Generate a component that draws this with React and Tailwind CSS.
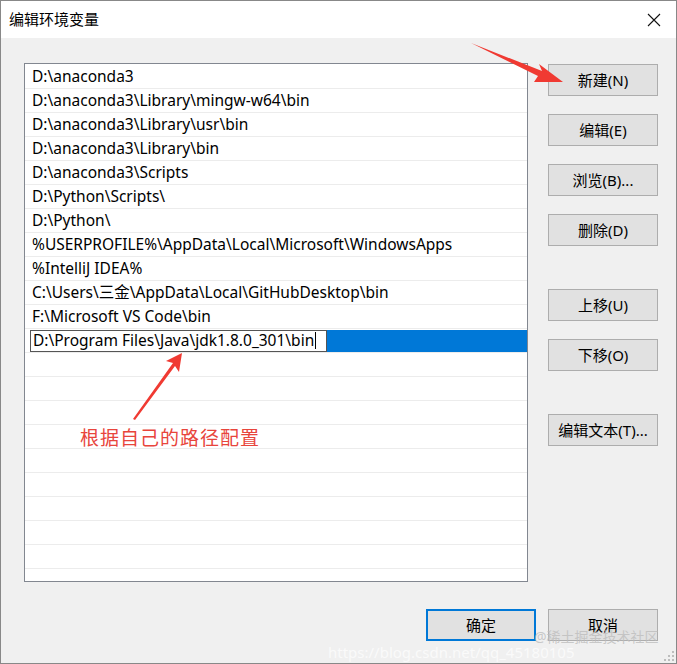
import React from 'react';

const paths = [
  'D:\\anaconda3',
  'D:\\anaconda3\\Library\\mingw-w64\\bin',
  'D:\\anaconda3\\Library\\usr\\bin',
  'D:\\anaconda3\\Library\\bin',
  'D:\\anaconda3\\Scripts',
  'D:\\Python\\Scripts\\',
  'D:\\Python\\',
  '%USERPROFILE%\\AppData\\Local\\Microsoft\\WindowsApps',
  '%IntelliJ IDEA%',
  'C:\\Users\\三金\\AppData\\Local\\GitHubDesktop\\bin',
  'F:\\Microsoft VS Code\\bin',
];

function Btn({ children, primary }) {
  return (
    <div
      className={`w-[110px] h-[32px] flex items-center justify-center text-[15px] text-black bg-[#e1e1e1] ${
        primary ? 'border-2 border-[#0078d7]' : 'border border-[#adadad]'
      }`}
    >
      {children}
    </div>
  );
}

export default function App() {
  const empty = Array.from({ length: 11 });
  return (
    <div
      className="relative w-[677px] h-[664px] overflow-hidden bg-[#f0f0f0] border border-[#888] flex flex-col font-['Noto_Sans','Noto_Sans_CJK_SC',sans-serif]"
    >
      {/* title bar */}
      <div className="h-[37px] bg-white flex items-center justify-between pl-[8px] pr-[14px] shrink-0">
        <span className="text-[15px] text-black">编辑环境变量</span>
        <svg width="14" height="14" viewBox="0 0 14 14" className="mr-[1px]">
          <path d="M1 1L13 13M13 1L1 13" stroke="#111" strokeWidth="1.1" />
        </svg>
      </div>

      <div className="flex pl-[23px] pt-[25px]">
        {/* list */}
        <div className="w-[504px] h-[519px] bg-white border border-[#828790] overflow-hidden pt-[1px]">
          {paths.map((p) => (
            <div key={p} className="h-[24px] border-b border-[#ececec] flex items-center pl-[7px] text-[15.5px] text-black whitespace-nowrap">
              {p}
            </div>
          ))}
          <div className="h-[24px] border-b border-[#ececec] flex items-center pl-[5px]">
            <div className="flex-1 h-[22px] bg-[#0078d7] flex items-center">
              <div className="w-[297px] h-[22px] bg-white border border-[#555] flex items-center pl-[2px] text-[15.5px] text-black whitespace-nowrap">
                D:\Program Files\Java\jdk1.8.0_301\bin
                <span className="w-px h-[17px] bg-black ml-[1px]" />
              </div>
            </div>
          </div>
          {empty.map((_, i) => (
            <div key={i} className="h-[24px] border-b border-[#ececec]" />
          ))}
        </div>

        {/* side buttons */}
        <div className="ml-[20px] pt-[1px] flex flex-col">
          <Btn>新建(N)</Btn>
          <div className="mt-[18px]"><Btn>编辑(E)</Btn></div>
          <div className="mt-[18px]"><Btn>浏览(B)...</Btn></div>
          <div className="mt-[18px]"><Btn>删除(D)</Btn></div>
          <div className="mt-[43px]"><Btn>上移(U)</Btn></div>
          <div className="mt-[18px]"><Btn>下移(O)</Btn></div>
          <div className="mt-[43px]"><Btn>编辑文本(T)...</Btn></div>
        </div>
      </div>

      {/* bottom buttons */}
      <div className="flex justify-end gap-[12px] pr-[18px] mt-[27px]">
        <Btn primary>确定</Btn>
        <Btn>取消</Btn>
      </div>

      {/* annotation text */}
      <div className="absolute left-[79px] top-[423px] text-[19px] text-[#e8453c] tracking-[1px]">
        根据自己的路径配置
      </div>

      {/* watermarks */}
      <div className="absolute left-[533px] top-[625px] text-[14px] text-[#bdbdbd]/80">@稀土掘金技术社区</div>
      <div className="absolute left-[327px] top-[640px] text-[15px] text-white/70">https://blog.csdn.net/qq_45180105</div>

      {/* arrows */}
      <svg className="absolute left-0 top-0 pointer-events-none" width="677" height="664">
        <polygon points="470,42 541,70 538,63 562,81 533,81 537,75" fill="#f03a32" />
        <polygon points="132,418 172,362 165,360 181,352 178,371 174,365 134,419" fill="#f03a32" />
      </svg>

      {/* resize grip */}
      <svg className="absolute right-[2px] bottom-[2px]" width="10" height="10">
        {[[7, 7], [7, 3], [3, 7], [7, -1], [-1, 7], [3, 3]].map(([x, y], i) => (
          <rect key={i} x={x + 1} y={y + 1} width="2" height="2" fill="#bdbdbd" />
        ))}
      </svg>
    </div>
  );
}
